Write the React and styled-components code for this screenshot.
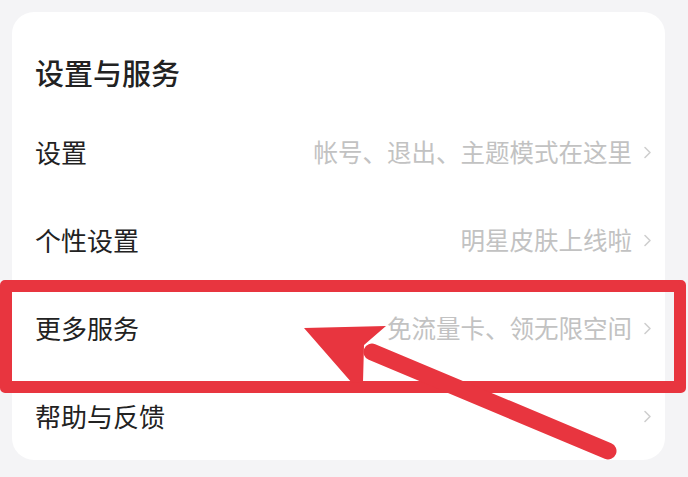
import React from 'react';
import styled, { createGlobalStyle } from 'styled-components';

const GlobalStyle = createGlobalStyle`
    html, body {
        margin: 0;
        padding: 0;
        background: #f4f4f6;
    }
    body {
        font-family: "Noto Sans CJK SC", "Noto Sans", sans-serif;
    }
`;

const Page = styled.div`
    position: relative;
    width: 688px;
    height: 477px;
    padding: 12px 23px 17px 12px;
    box-sizing: border-box;
    overflow: hidden;
`;

const Card = styled.div`
    background: #ffffff;
    border-radius: 22px;
    padding: 40px 13px 0 23px;
    height: 448px;
    box-sizing: border-box;
    display: flex;
    flex-direction: column;
`;

const Title = styled.div`
    font-size: 29px;
    font-weight: 500;
    line-height: 40px;
    color: #222;
    margin-bottom: 16px;
`;

const Row = styled.div`
    height: 88px;
    display: flex;
    align-items: center;
    justify-content: space-between;
`;

const Label = styled.span`
    font-size: 26px;
    color: #222;
    line-height: 1;
`;

const Hint = styled.span`
    display: flex;
    align-items: center;
    gap: 11px;
    font-size: 24.5px;
    color: #c2c2c2;
    line-height: 1;
`;

const Overlay = styled.div`
    position: absolute;
    inset: 0;
    pointer-events: none;
`;

const Frame = styled.div`
    position: absolute;
    left: 0;
    top: 280px;
    width: 686px;
    height: 113px;
    box-sizing: border-box;
    border: 12px solid #e8353f;
    border-radius: 5px;
`;

const ArrowSvg = styled.svg`
    position: absolute;
    left: 0;
    top: 0;
`;

const Chevron = () => (
    <svg width="9" height="13" viewBox="0 0 9 13">
        <path d="M2 1.5 L7 6.5 L2 11.5" fill="none" stroke="#cfcfcf" strokeWidth="1.6" strokeLinecap="round" strokeLinejoin="round" />
    </svg>
);

const rows = [
    { label: '设置', hint: '帐号、退出、主题模式在这里' },
    { label: '个性设置', hint: '明星皮肤上线啦' },
    { label: '更多服务', hint: '免流量卡、领无限空间' },
    { label: '帮助与反馈', hint: '' },
];

const App = () => (
    <Page>
        <GlobalStyle />
        <Card>
            <Title>设置与服务</Title>
            {rows.map((r) => (
                <Row key={r.label}>
                    <Label>{r.label}</Label>
                    <Hint>
                        {r.hint}
                        <Chevron />
                    </Hint>
                </Row>
            ))}
        </Card>
        <Overlay>
            <Frame />
            <ArrowSvg width="688" height="477" viewBox="0 0 688 477">
                <line x1="372" y1="352" x2="608" y2="451" stroke="#e8353f" strokeWidth="17" strokeLinecap="round" />
                <polygon points="304,328 386,326 364,345 363,382 352,383" fill="#e8353f" />
            </ArrowSvg>
        </Overlay>
    </Page>
);

export default App;
